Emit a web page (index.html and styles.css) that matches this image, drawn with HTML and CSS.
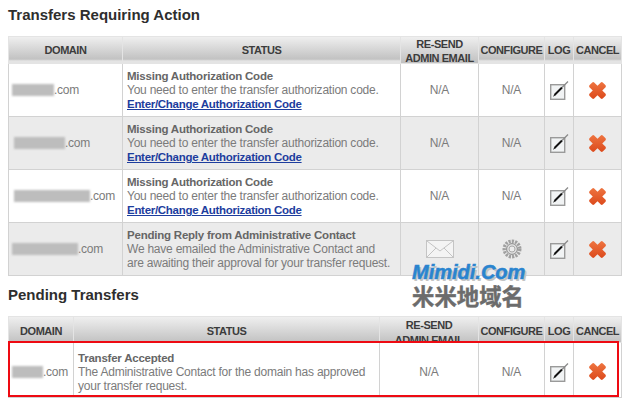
FILE: index.html
```html
<!DOCTYPE html>
<html lang="en">
<head>
<meta charset="utf-8">
<title>Transfers</title>
<link rel="stylesheet" href="styles.css">
</head>
<body>
<svg class="defs" width="0" height="0" aria-hidden="true">
  <defs>
    <linearGradient id="xg" x1="0" y1="0" x2="0" y2="1"><stop offset="0" stop-color="#ee7440"/><stop offset="1" stop-color="#dc4a1c"/></linearGradient>
    <symbol id="log" viewBox="0 0 20 20">
      <rect x="1.7" y="4.7" width="14" height="14.6" fill="#f1f3f4" stroke="#9a9a9a" stroke-width="1.4"/>
      <path d="M5.5 15 L13 7.5" stroke="#111" stroke-width="2"/>
      <path d="M13 7.5 L19 1.5" stroke="#8a8a8a" stroke-width="1.3"/>
      <path d="M4 16.8 L5.2 14.4 L6.2 15.6 Z" fill="#111"/>
    </symbol>
    <symbol id="cancel" viewBox="0 0 20 20">
      <path d="M1.5 4.5 L4.5 1.5 Q5.5 .8 6.5 1.5 L10 5 L13.5 1.5 Q14.5 .8 15.5 1.5 L18.5 4.5 Q19.2 5.5 18.5 6.5 L15 10 L18.5 13.5 Q19.2 14.5 18.5 15.5 L15.5 18.5 Q14.5 19.2 13.5 18.5 L10 15 L6.5 18.5 Q5.5 19.2 4.5 18.5 L1.5 15.5 Q.8 14.5 1.5 13.5 L5 10 L1.5 6.5 Q.8 5.5 1.5 4.5 Z" fill="url(#xg)"/>
    </symbol>
  </defs>
</svg>

<h2 class="title first">Transfers Requiring Action</h2>
<table class="grid t1">
  <colgroup><col class="c1"><col class="c2"><col class="c3"><col class="c4"><col class="c5"><col class="c6"></colgroup>
  <thead>
    <tr>
      <th><div class="hd">DOMAIN</div></th><th><div class="hd">STATUS</div></th>
      <th><div class="hd two">RE-SEND<br>ADMIN EMAIL</div></th><th><div class="hd">CONFIGURE</div></th><th><div class="hd">LOG</div></th><th><div class="hd">CANCEL</div></th>
    </tr>
  </thead>
  <tbody>
    <tr>
      <td class="dom"><span class="blur w42"></span>.com</td>
      <td class="st"><b>Missing Authorization Code</b><br>You need to enter the transfer authorization code.<br><a href="#">Enter/Change Authorization Code</a></td>
      <td class="ctr">N/A</td><td class="ctr">N/A</td>
      <td class="ctr"><svg class="ic-log"><use href="#log"/></svg></td><td class="ctr"><svg class="ic-x"><use href="#cancel"/></svg></td>
    </tr>
    <tr class="alt">
      <td class="dom"><span class="blur w51"></span>.com</td>
      <td class="st"><b>Missing Authorization Code</b><br>You need to enter the transfer authorization code.<br><a href="#">Enter/Change Authorization Code</a></td>
      <td class="ctr">N/A</td><td class="ctr">N/A</td>
      <td class="ctr"><svg class="ic-log"><use href="#log"/></svg></td><td class="ctr"><svg class="ic-x"><use href="#cancel"/></svg></td>
    </tr>
    <tr>
      <td class="dom"><span class="blur w76"></span>.com</td>
      <td class="st"><b>Missing Authorization Code</b><br>You need to enter the transfer authorization code.<br><a href="#">Enter/Change Authorization Code</a></td>
      <td class="ctr">N/A</td><td class="ctr">N/A</td>
      <td class="ctr"><svg class="ic-log"><use href="#log"/></svg></td><td class="ctr"><svg class="ic-x"><use href="#cancel"/></svg></td>
    </tr>
    <tr class="alt">
      <td class="dom"><span class="blur w65"></span>.com</td>
      <td class="st"><b>Pending Reply from Administrative Contact</b><br>We have emailed the Administrative Contact and<br>are awaiting their approval for your transfer request.</td>
      <td class="ctr">
        <svg class="ic-mail" viewBox="0 0 28 18"><rect x=".5" y=".5" width="27" height="17" fill="#f4f4f4" stroke="#c4c4c4"/><path d="M1 1 L14 11 L27 1 M1 17 L10 8 M27 17 L18 8" fill="none" stroke="#c4c4c4"/></svg>
      </td>
      <td class="ctr">
        <svg class="ic-gear" viewBox="0 0 20 20"><circle cx="10" cy="10" r="7.8" fill="none" stroke="#a0a0a0" stroke-width="3.4" stroke-dasharray="2.2 1.1"/><circle cx="10" cy="10" r="5.4" fill="#dedede" stroke="#8a8a8a"/><circle cx="10" cy="10" r="3" fill="#ececec" stroke="#aaa"/></svg>
      </td>
      <td class="ctr"><svg class="ic-log"><use href="#log"/></svg></td><td class="ctr"><svg class="ic-x"><use href="#cancel"/></svg></td>
    </tr>
  </tbody>
</table>

<h2 class="title second">Pending Transfers</h2>
<div class="wrap">
  <table class="grid t2">
    <colgroup><col class="d1"><col class="d2"><col class="d3"><col class="c4"><col class="c5"><col class="c6"></colgroup>
    <thead>
      <tr>
        <th><div class="hd short">DOMAIN</div></th><th><div class="hd short">STATUS</div></th>
        <th><div class="hd short clip">RE-SEND<br>ADMIN EMAIL</div></th><th><div class="hd short">CONFIGURE</div></th><th><div class="hd short">LOG</div></th><th><div class="hd short">CANCEL</div></th>
      </tr>
    </thead>
    <tbody>
      <tr>
        <td class="dom"><span class="blur w31"></span>.com</td>
        <td class="st"><b>Transfer Accepted</b><br>The Administrative Contact for the domain has approved<br>your transfer request.</td>
        <td class="ctr">N/A</td><td class="ctr">N/A</td>
        <td class="ctr"><svg class="ic-log"><use href="#log"/></svg></td><td class="ctr"><svg class="ic-x"><use href="#cancel"/></svg></td>
      </tr>
    </tbody>
  </table>
  <div class="redbox"></div>
</div>

<div class="mark">
  <div class="mark-en">Mimidi.Com</div>
  <div class="mark-cn">米米地域名</div>
</div>
</body>
</html>
```
FILE: styles.css
```css
* { box-sizing: border-box; }
html, body { margin: 0; padding: 0; }
body {
  width: 630px;
  height: 406px;
  overflow: hidden;
  background: #fff;
  position: relative;
  padding-left: 8px;
  font-family: "Liberation Sans", Arial, sans-serif;
  font-size: 12px;
  letter-spacing: -.23px;
  color: #7b7b7b;
}
.defs { position: absolute; }

.title {
  margin: 0;
  font-size: 15px;
  line-height: 18px;
  font-weight: bold;
  letter-spacing: 0;
  color: #2e2e2e;
}
.title.first { padding-top: 6px; height: 36px; }
.title.second { padding-top: 10px; height: 40px; }

.grid {
  border-collapse: collapse;
  table-layout: fixed;
  width: 613px;
}
.grid th, .grid td { border: 1px solid #d2d2d2; padding: 0; }
.grid th { border-color: #e4e4e4; background: #e4e4e4; vertical-align: top; }
.hd {
  height: 24px;
  display: flex;
  align-items: center;
  justify-content: center;
  text-align: center;
  font-size: 11px;
  letter-spacing: -.45px;
  line-height: 14px;
  font-weight: bold;
  color: #3c3c3c;
  background: linear-gradient(#efefef, #c2c2c2);
  white-space: nowrap;
}
.t1 th { height: 27px; }
.t1 .hd { height: 26px; background: linear-gradient(#efefef, #c2c2c2 85%, #e4e4e4 92%); }
.hd.two { line-height: 14px; padding-top: 2px; }
.t1 .hd.two { background: linear-gradient(#efefef, #c2c2c2 96%); }
.t2 th { height: 25px; }
.hd.short { height: 25px; padding-top: 2px; }
.hd.clip { align-items: flex-start; overflow: hidden; padding-top: 1px; line-height: 15px; }

.c1 { width: 114px; } .c2 { width: 278px; } .c3 { width: 78px; }
.c4 { width: 66px; } .c5 { width: 29px; } .c6 { width: 48px; }
.d1 { width: 65px; } .d2 { width: 306px; } .d3 { width: 99px; }

.t1 tbody tr { height: 53px; }
.t2 tbody tr { height: 55px; }
tr.alt td { background: #ebebeb; }

.dom { padding-left: 3px !important; white-space: nowrap; text-align: left; }
.st { padding-left: 4px !important; line-height: 14px; white-space: nowrap; }
.st b { color: #666; font-size: 11.5px; letter-spacing: -.22px; }
.st a { color: #1d3d9e; font-weight: bold; font-size: 11.5px; letter-spacing: -.29px; }
.t2 tbody td { padding-top: 3px; }
.ctr { text-align: center; }
.ctr svg { display: block; margin: 0 auto; }

.blur {
  display: inline-block;
  height: 12px;
  vertical-align: -2px;
  background: #bdbdbd;
  filter: blur(1.2px);
}
.w42 { width: 42px; }
.w51 { width: 51px; margin-left: 2px; }
.w76 { width: 76px; margin-left: 2px; }
.w65 { width: 66px; }
.w31 { width: 31px; }

.ic-log { width: 20px; height: 20px; }
.ic-x { width: 19px; height: 19px; }
.ic-mail { width: 28px; height: 18px; }
.ic-gear { width: 20px; height: 20px; }

.wrap { position: relative; width: 613px; }
.redbox {
  position: absolute;
  left: 0;
  top: 25px;
  width: 611px;
  height: 56px;
  border: 2px solid #ee0a12;
  pointer-events: none;
}

.mark {
  position: absolute;
  left: 412px;
  top: 261px;
  width: 120px;
  letter-spacing: 0;
}
.mark-en {
  font-size: 20px;
  line-height: 22px;
  font-weight: bold;
  font-style: italic;
  color: #2a84cf;
  -webkit-text-stroke: .5px #2a84cf;
  text-shadow: 2px 2px 0 #c4c4c4;
}
.mark-cn {
  font-family: "Noto Sans CJK SC", sans-serif;
  font-size: 22.4px;
  line-height: 24px;
  font-weight: bold;
  color: #6c6c6c;
  -webkit-text-stroke: .4px #6c6c6c;
}
```
